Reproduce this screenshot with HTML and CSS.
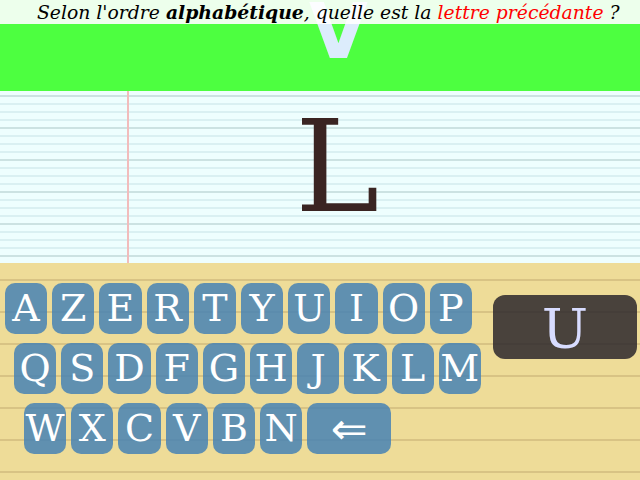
FILE: index.html
```html
<!DOCTYPE html>
<html lang="fr">
<head>
<meta charset="utf-8">
<title>Alphabet</title>
<link rel="stylesheet" href="styles.css">
</head>
<body>
<div class="screen">
  <div class="banner">
    <div class="ghost">V</div>
    <div class="question">Selon l'ordre <b>alphabétique</b>, quelle est la <span class="red">lettre précédante</span> ?</div>
  </div>
  <div class="paper">
    <div class="big">L</div>
  </div>
  <div class="board">
    <div class="keys">
      <div class="row r1">
        <div class="key">A</div><div class="key">Z</div><div class="key">E</div><div class="key">R</div><div class="key">T</div><div class="key">Y</div><div class="key">U</div><div class="key">I</div><div class="key">O</div><div class="key">P</div>
      </div>
      <div class="row r2">
        <div class="key">Q</div><div class="key">S</div><div class="key">D</div><div class="key">F</div><div class="key">G</div><div class="key">H</div><div class="key">J</div><div class="key">K</div><div class="key">L</div><div class="key">M</div>
      </div>
      <div class="row r3">
        <div class="key">W</div><div class="key">X</div><div class="key">C</div><div class="key">V</div><div class="key">B</div><div class="key">N</div><div class="key back">⇐</div>
      </div>
    </div>
    <div class="answer">U</div>
  </div>
</div>
</body>
</html>
```
FILE: styles.css
```css
html, body {
  margin: 0;
  padding: 0;
}
body {
  width: 640px;
  height: 480px;
  overflow: hidden;
  font-family: "DejaVu Serif", serif;
}
.screen {
  width: 640px;
  height: 480px;
  display: flex;
  flex-direction: column;
}
.banner {
  height: 91px;
  background: #4dff40;
  position: relative;
  overflow: hidden;
  flex: none;
}
.question {
  position: relative;
  z-index: 2;
  height: 24px;
  background: rgba(255, 255, 255, 0.9);
  font-style: italic;
  font-size: 18.8px;
  line-height: 24px;
  padding-left: 37px;
  color: #000;
  white-space: nowrap;
}
.question b {
  font-weight: bold;
}
.red {
  color: #ff0000;
}
.ghost {
  position: absolute;
  z-index: 1;
  left: 309px;
  top: -6px;
  font-family: "DejaVu Sans", sans-serif;
  font-weight: bold;
  font-size: 76px;
  line-height: 76px;
  color: #dcecfc;
}
.paper {
  height: 172px;
  flex: none;
  background-color: #eefefe;
  background-image:
    linear-gradient(to right, transparent 127px, #f2bcbc 127px, #f2bcbc 129px, transparent 129px),
    repeating-linear-gradient(to bottom, transparent 0, transparent 4px, #cce2e2 4px, #cce2e2 6px, transparent 6px, transparent 32px),
    repeating-linear-gradient(to bottom, transparent 0, transparent 4px, #daf0f2 4px, #daf0f2 6px, transparent 6px, transparent 8px);
  display: flex;
}
.big {
  margin-top: 13px;
  padding-left: 295px;
  font-size: 127px;
  line-height: 127px;
  height: 127px;
  color: #3a2422;
}
.board {
  flex: 1;
  background-color: #eedc98;
  background-image: repeating-linear-gradient(to bottom, transparent 0, transparent 16px, #d8c384 16px, #d8c384 18px, transparent 18px, transparent 32px);
  display: flex;
  align-items: flex-start;
}
.keys {
  padding-top: 20px;
  display: flex;
  flex-direction: column;
  gap: 9px;
}
.row {
  display: flex;
  gap: 5px;
}
.r1 { padding-left: 5px; }
.r2 { padding-left: 14px; }
.r3 { padding-left: 24px; }
.key {
  width: 42.2px;
  height: 51px;
  border-radius: 10px;
  background: rgba(70, 130, 180, 0.85);
  color: #fff;
  font-size: 38px;
  line-height: 51px;
  text-align: center;
}
.key.back {
  width: 84px;
  font-family: "DejaVu Sans", sans-serif;
  font-size: 44px;
}
.answer {
  margin-top: 32px;
  margin-left: auto;
  margin-right: 3px;
  width: 144px;
  height: 64px;
  border-radius: 12px;
  background: rgba(43, 39, 43, 0.85);
  color: #d8dcff;
  font-size: 55px;
  line-height: 64px;
  padding-top: 2px;
  box-sizing: border-box;
  text-align: center;
}
```
